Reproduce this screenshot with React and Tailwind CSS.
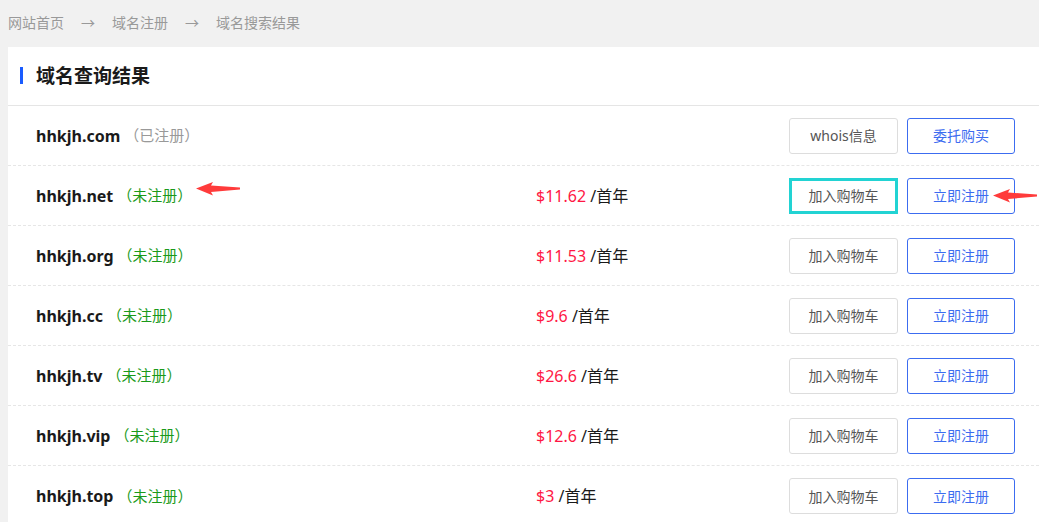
import React from "react";

const rows = [
  { name: "hhkjh.com", registered: true },
  { name: "hhkjh.net", price: "$11.62", arrows: true, focus: true },
  { name: "hhkjh.org", price: "$11.53" },
  { name: "hhkjh.cc", price: "$9.6" },
  { name: "hhkjh.tv", price: "$26.6" },
  { name: "hhkjh.vip", price: "$12.6" },
  { name: "hhkjh.top", price: "$3" },
];

function Arrow({ className }) {
  return (
    <svg className={className} width="44" height="14" viewBox="0 0 44 14">
      <path d="M0 6.5 L17 0 L15 3.5 L44 5.5 L44 7.5 L15 10 L17 13.5 Z" fill="#ff3b3b" />
    </svg>
  );
}

export default function App() {
  return (
    <div
      className="w-[1039px] h-[522px] overflow-hidden bg-[#f1f1f1]"
      style={{ fontFamily: '"Noto Sans", "Noto Sans CJK SC", sans-serif' }}
    >
      <div className="h-[47px] flex items-center pl-2 pb-[3px] text-[14px] text-[#999] gap-[17px]">
        <span>网站首页</span>
        <span>→</span>
        <span>域名注册</span>
        <span>→</span>
        <span>域名搜索结果</span>
      </div>
      <div className="ml-2 bg-white h-[475px]">
        <div className="h-[59px] flex items-center border-b border-[#e5e5e5] pl-3">
          <div className="w-[3px] h-[17px] bg-[#1a5cff] mr-[13px] mb-[1px]" />
          <span className="text-[19px] font-bold text-[#1a1a1a]">域名查询结果</span>
        </div>
        {rows.map((r, i) => (
          <div
            key={r.name}
            className={
              "relative h-[60px] flex items-center pl-7 pr-6 " +
              (i < rows.length - 1 ? "border-b border-dashed border-[#e6e6e6]" : "")
            }
          >
            <div className="w-[500px] flex items-center">
              <span className="text-[16px] font-bold text-[#1a1a1a]">{r.name}</span>
              {r.registered ? (
                <span className="text-[15px] text-[#999] ml-[4px]">（已注册）</span>
              ) : (
                <span className="text-[15px] text-[#1a9a1a] ml-[4px]">（未注册）</span>
              )}
            </div>
            <div className="flex-1 text-[16px]">
              {r.price && (
                <>
                  <span className="text-[#ff1744]">{r.price}</span>
                  <span className="text-[#1a1a1a]"> /首年</span>
                </>
              )}
            </div>
            <div className="flex gap-[9px]">
              {r.registered ? (
                <button className="w-[109px] h-[36px] border border-[#ddd] rounded-[3px] text-[14px] text-[#555]">
                  whois信息
                </button>
              ) : (
                <button
                  className={
                    "w-[109px] h-[36px] text-[14px] text-[#555] " +
                    (r.focus ? "border-[3px] border-[#22d3d3]" : "border border-[#ddd] rounded-[3px]")
                  }
                >
                  加入购物车
                </button>
              )}
              <button className="w-[108px] h-[36px] border border-[#3c6cf0] rounded-[3px] text-[14px] text-[#3c6cf0]">
                {r.registered ? "委托购买" : "立即注册"}
              </button>
            </div>
            {r.arrows && (
              <>
                <Arrow className="absolute left-[188px] top-[16px]" />
                <Arrow className="absolute left-[985px] top-[23px]" />
              </>
            )}
          </div>
        ))}
      </div>
    </div>
  );
}
